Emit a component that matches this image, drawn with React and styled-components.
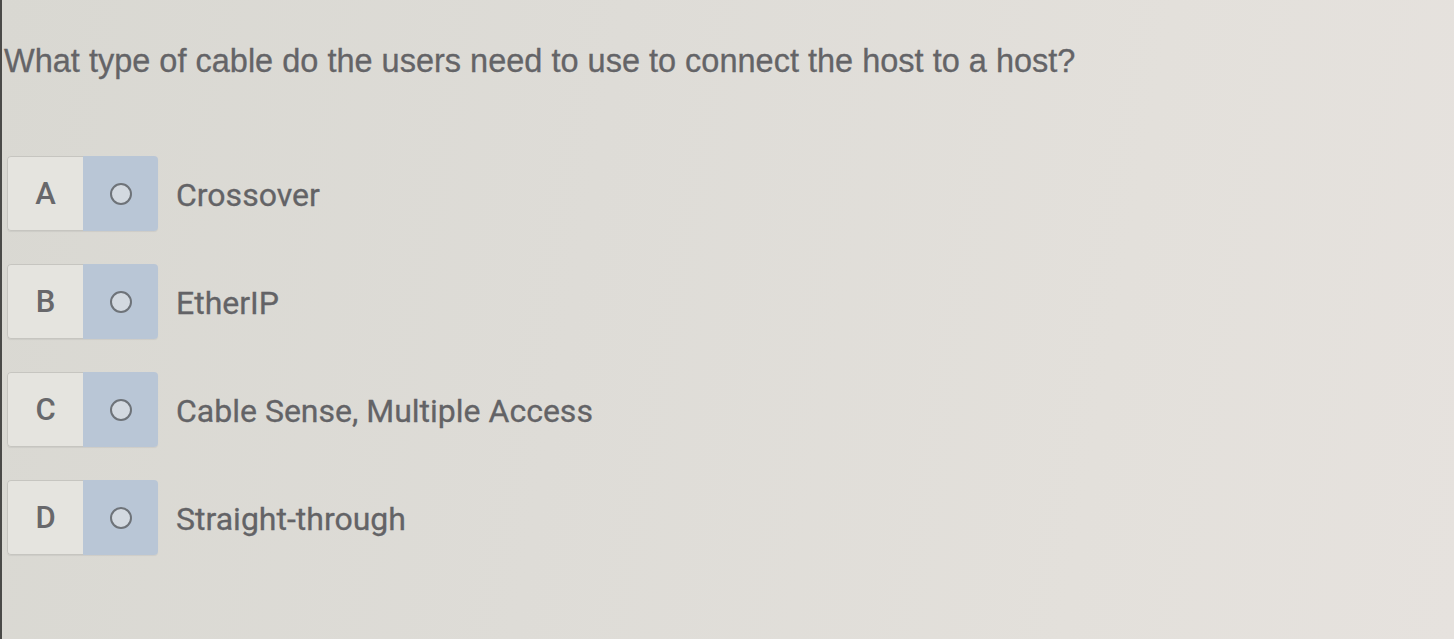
import * as React from "react";
import styled, { createGlobalStyle } from "styled-components";

const GlobalStyle = createGlobalStyle`
  html, body {
    margin: 0;
    padding: 0;
    height: 100%;
  }

  body {
    background: #dddbd6;
  }
`;

const options = [
  { letter: "A", text: "Crossover" },
  { letter: "B", text: "EtherIP" },
  { letter: "C", text: "Cable Sense, Multiple Access" },
  { letter: "D", text: "Straight-through" },
];

const App = () => {
  return (
    <>
      <GlobalStyle />
      <Screen>
        <Question>
          What type of cable do the users need to use to connect the host to a
          host?
        </Question>
        <OptionList>
          {options.map((option) => (
            <OptionRow key={option.letter}>
              <ChoiceBox>
                <LetterCell>{option.letter}</LetterCell>
                <RadioCell>
                  <RadioDot />
                </RadioCell>
              </ChoiceBox>
              <OptionText>{option.text}</OptionText>
            </OptionRow>
          ))}
        </OptionList>
      </Screen>
    </>
  );
};

const Screen = styled.div`
  box-sizing: border-box;
  width: 1454px;
  height: 639px;
  overflow: hidden;
  padding: 40px 0 0 5px;
  border-left: 2px solid #4a4a48;
  background: linear-gradient(
    100deg,
    #d9d8d2 0%,
    #dedcd7 40%,
    #e3e0db 75%,
    #e6e2de 100%
  );
`;

const Question = styled.h1`
  margin: 0 0 0 -3px;
  font-family: "Liberation Sans", Arial, sans-serif;
  font-size: 32.5px;
  font-weight: 400;
  line-height: 42px;
  color: #646467;
  -webkit-text-stroke: 0.3px #646467;
`;

const OptionList = styled.div`
  display: flex;
  flex-direction: column;
  gap: 33px;
  margin-top: 74px;
`;

const OptionRow = styled.div`
  display: flex;
  align-items: center;
  gap: 18px;
`;

const ChoiceBox = styled.div`
  display: flex;
  width: 151px;
  height: 75px;
  border-radius: 4px;
  overflow: hidden;
  box-shadow: 0 1px 1px rgba(0, 0, 0, 0.06);
`;

const LetterCell = styled.div`
  box-sizing: border-box;
  width: 76px;
  display: flex;
  align-items: center;
  justify-content: center;
  background: #e5e4df;
  border: 1px solid #c6c5c0;
  border-right: none;
  border-radius: 4px 0 0 4px;
  font-family: Roboto, "Liberation Sans", sans-serif;
  font-size: 31px;
  font-weight: 500;
  color: #68686b;
`;

const RadioCell = styled.div`
  flex: 1;
  display: flex;
  align-items: center;
  justify-content: center;
  background: #b9c6d6;
`;

const RadioDot = styled.span`
  box-sizing: border-box;
  width: 22px;
  height: 22px;
  border-radius: 50%;
  border: 2px solid #6e7379;
  background: #d3d9e0;
`;

const OptionText = styled.span`
  font-family: Roboto, "Liberation Sans", sans-serif;
  font-size: 32px;
  color: #636366;
  -webkit-text-stroke: 0.3px #636366;
  margin-top: 3px;
`;

export default App;
